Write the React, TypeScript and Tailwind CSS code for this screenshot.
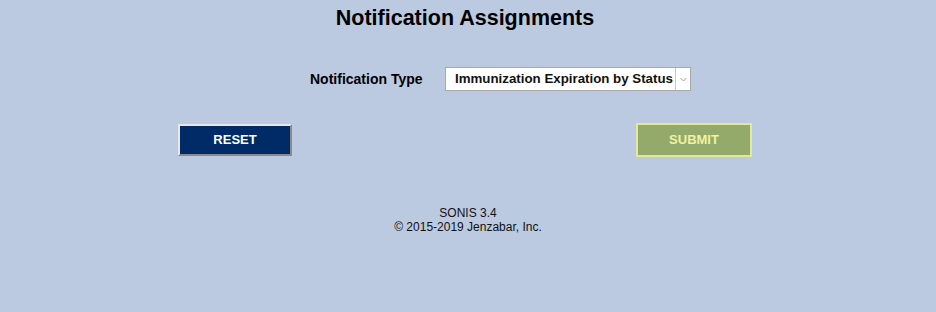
import React from 'react';

const App: React.FC = () => {
  return (
    <div className="w-[936px] h-[312px] bg-[#bccae1] font-['Liberation_Sans',Arial,sans-serif] text-black overflow-hidden">
      <h1 className="pt-[6px] text-center text-[21.5px] font-bold leading-[24px] pr-[6px]">
        Notification Assignments
      </h1>

      <div className="flex items-center mt-[37px] ml-[310px]">
        <span className="text-[14px] font-bold w-[135px]">Notification Type</span>
        <div className="flex h-[24px] w-[246px] border border-[#a9a9a9] bg-white">
          <div className="flex-1 flex items-center pl-[9px] text-[13.3px] font-bold text-[#111] whitespace-nowrap overflow-hidden">
            Immunization Expiration by Status
          </div>
          <div className="w-[15px] border-l border-[#c8c8c8] flex items-center justify-center">
            <svg width="7" height="5" viewBox="0 0 7 5">
              <path d="M0.5 1 L3.5 4 L6.5 1" fill="none" stroke="#a0a0a0" strokeWidth="1" />
            </svg>
          </div>
        </div>
      </div>

      <div className="flex justify-between items-center mt-[32px] ml-[178px] w-[574px]">
        <button className="w-[114px] h-[32px] bg-[#002b66] text-white text-[13px] font-bold border-2 border-t-[#e8e8e8] border-l-[#e8e8e8] border-b-[#8a8a8a] border-r-[#8a8a8a]">
          RESET
        </button>
        <button className="w-[116px] h-[34px] bg-[#93aa6b] text-[#f0f2a2] text-[13px] font-bold border-2 border-[#e1ea9c]">
          SUBMIT
        </button>
      </div>

      <div className="mt-[49px] text-center text-[12px] leading-[14px] text-[#111]">
        <div>SONIS 3.4</div>
        <div>© 2015-2019 Jenzabar, Inc.</div>
      </div>
    </div>
  );
};

export default App;
